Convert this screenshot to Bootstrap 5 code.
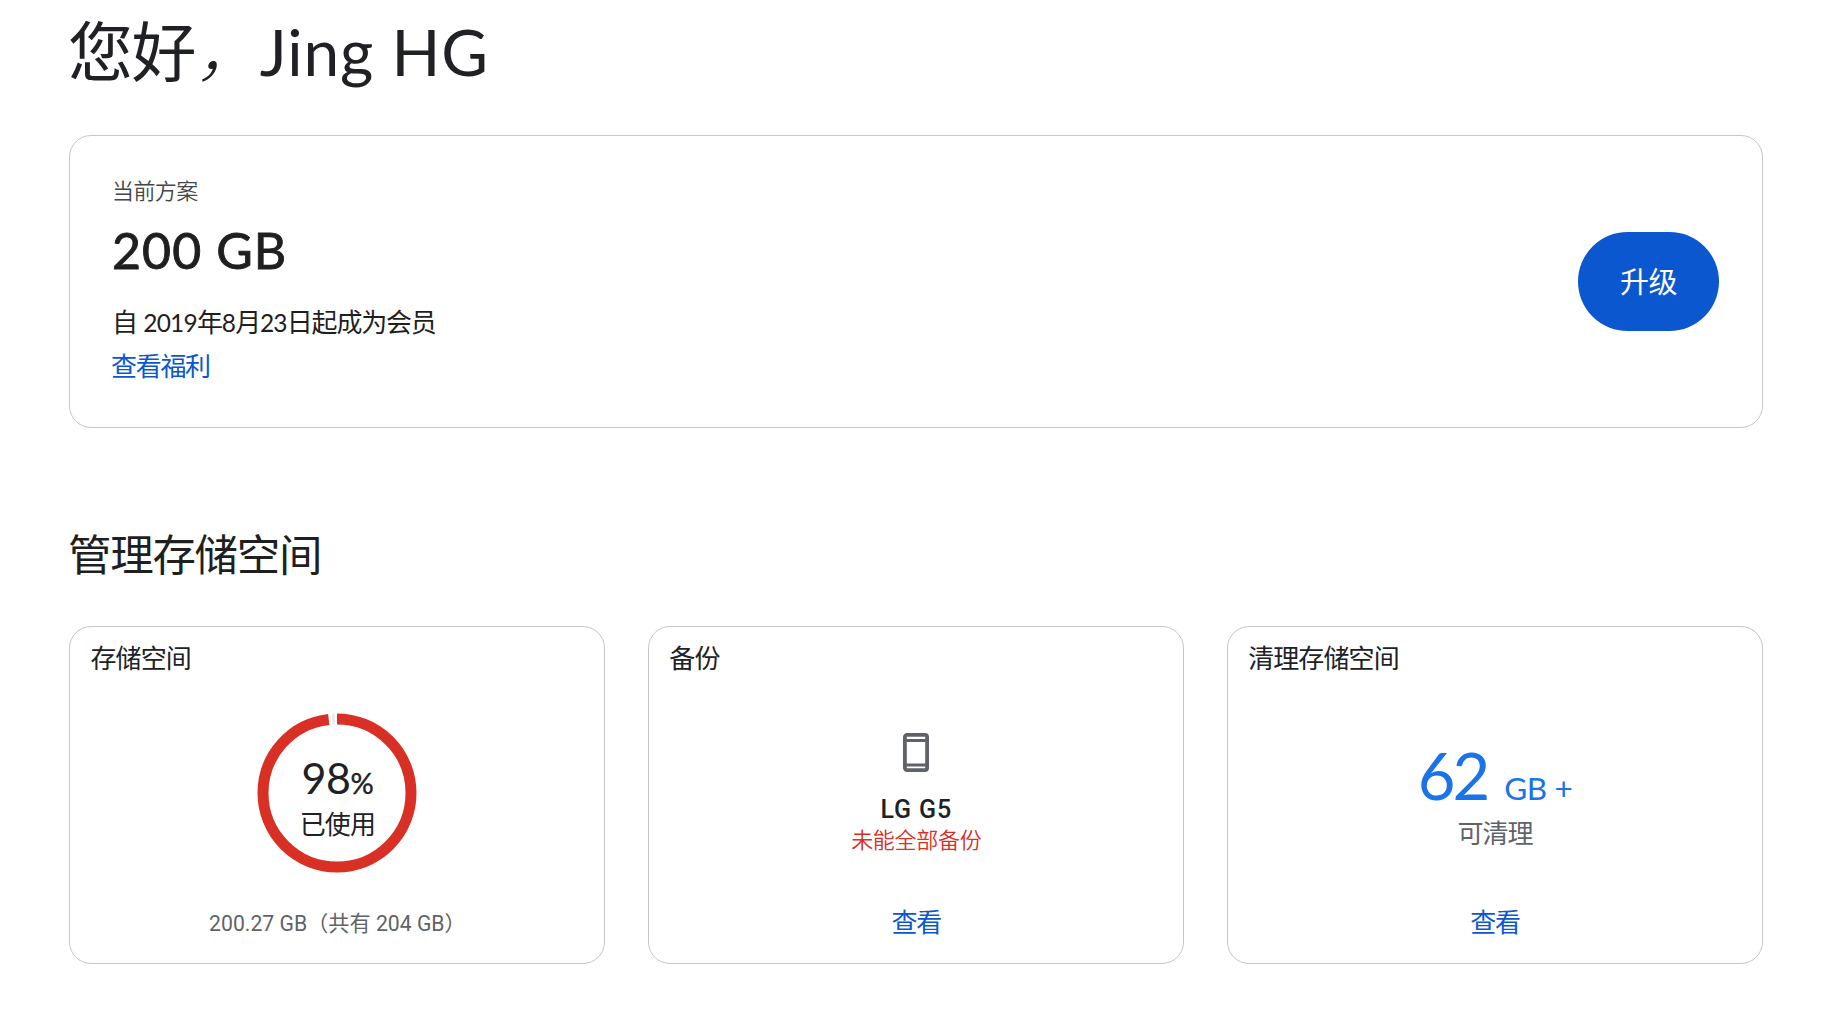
<!DOCTYPE html>
<html lang="zh-CN">
<head>
<meta charset="utf-8">
<meta name="viewport" content="width=device-width, initial-scale=1">
<title>存储空间</title>
<link href="https://cdn.jsdelivr.net/npm/bootstrap@5.3.0/dist/css/bootstrap.min.css" rel="stylesheet">
<style>
body{font-family:Lato,"Noto Sans CJK SC",sans-serif;color:#1f1f1f;background:#fff;overflow:hidden;font-weight:400}
.page{padding:0 74px 0 69px}
.greet{font-size:65px;letter-spacing:-1.4px;line-height:80px;padding-top:11px;color:#202124;height:135px;font-weight:400;white-space:nowrap;text-indent:-1px}
.greet .comma{font-weight:300;font-style:italic}
.greet .latin{font-size:64px;letter-spacing:.9px;margin-left:1px}
.panel{border:1px solid #c4c7c5;border-radius:22px}
.plan{height:293px;padding:40px 43px 0 42px}
.t21{font-size:22px;letter-spacing:-.6px;line-height:30px;font-weight:350}
.t25{font-size:26px;letter-spacing:-.9px;line-height:36px}
.plan-label{color:#444746}
.plan-size{font-size:50px;line-height:60px;letter-spacing:1.1px;-webkit-text-stroke:.9px #1f1f1f;margin-top:14px}
.since{margin-top:24px;letter-spacing:-1.2px}
.since .latin{font-size:24.5px;letter-spacing:-.8px}
.since .latin:first-child{margin-left:1px}
a.lk{color:#0b57d0;text-decoration:none;letter-spacing:-1.3px}
.perk{margin-top:7px;margin-left:-1px}
.upgrade{width:141px;height:99px;border-radius:50px;background:#0b57d0;color:#fff;font-size:29px;letter-spacing:-.6px;margin-top:56px;padding:0}
.section-head{font-size:43.5px;letter-spacing:-1.3px;line-height:60px;font-weight:400;margin:96px 0 42px;text-indent:-1px}
.tiles{gap:42.5px}
.tile{height:338px;flex:1 1 0;padding:13px 20px 0 20.5px;color:#202124}
.tile-body{height:224px;margin-top:4px}
.tile-foot{line-height:36px}
.ring{width:160px;height:160px;margin-top:33px}
.ring svg{inset:0}
.pct{font-size:43px;line-height:44px;margin-top:43px;letter-spacing:-.5px}
.pct .sign{font-size:29px;-webkit-text-stroke:.4px #202124}
.used{margin-top:1px}
.quota{font-family:Roboto,"Noto Sans CJK SC",sans-serif;font-size:21.2px;color:#5f6368;font-weight:400;padding-top:2px}
.device{font-family:Roboto,sans-serif;font-size:25px;font-weight:500;letter-spacing:.9px;line-height:32px;margin-top:22px}
.phone{margin-top:53px}
.warn{color:#d93025;letter-spacing:-.3px;margin-top:-1px}
.free{color:#1a73e8;font-size:65px;line-height:70px;letter-spacing:-3px;margin-top:60px}
.free .unit{font-size:31.5px;letter-spacing:-.4px;margin-left:17px;word-spacing:0}
.muted{color:#5f6368;margin-top:-8px}
</style>
<script src="https://cdn.jsdelivr.net/npm/bootstrap@5.3.0/dist/js/bootstrap.bundle.min.js"></script>
</head>
<body>
<main class="page">
  <h1 class="greet m-0">您好<span class="comma">，</span><span class="latin">Jing HG</span></h1>
  <section class="panel plan d-flex justify-content-between align-items-start">
    <div>
      <div class="t21 plan-label">当前方案</div>
      <div class="plan-size">200 GB</div>
      <div class="t25 since">自 <span class="latin">2019</span>年<span class="latin">8</span>月<span class="latin">23</span>日起成为会员</div>
      <div class="t25 perk"><a class="lk" href="#">查看福利</a></div>
    </div>
    <button type="button" class="btn upgrade">升级</button>
  </section>
  <h2 class="section-head">管理存储空间</h2>
  <section class="tiles d-flex">
    <article class="panel tile">
      <div class="t25">存储空间</div>
      <div class="tile-body d-flex flex-column align-items-center">
        <div class="ring position-relative text-center">
          <svg class="position-absolute" width="160" height="160" viewBox="0 0 160 160" fill="none" stroke-width="11">
            <circle cx="80" cy="80" r="74" stroke="#d93025" pathLength="100" stroke-dasharray="98.2 1.8" transform="rotate(-90 80 80)"/>
            <path d="M75.3 6.2L77.7 6.1" stroke="#e8eaed"/>
          </svg>
          <div class="pct">98<span class="sign">%</span></div>
          <div class="t25 used">已使用</div>
        </div>
      </div>
      <div class="tile-foot quota text-center">200.27 GB（共有 204 GB）</div>
    </article>
    <article class="panel tile">
      <div class="t25">备份</div>
      <div class="tile-body d-flex flex-column align-items-center">
        <svg class="phone" width="26" height="39" viewBox="0 0 26 39" fill="none" stroke="#5f6368">
          <rect x="1.9" y="1.9" width="22.2" height="35.2" rx="2.2" stroke-width="3.8"/>
          <path d="M2 7.5H24M2 32H24" stroke-width="3"/>
        </svg>
        <div class="device">LG G5</div>
        <div class="t21 warn">未能全部备份</div>
      </div>
      <div class="tile-foot t25 text-center"><a class="lk" href="#">查看</a></div>
    </article>
    <article class="panel tile">
      <div class="t25">清理存储空间</div>
      <div class="tile-body d-flex flex-column align-items-center">
        <div class="free">62<span class="unit">GB +</span></div>
        <div class="t25 muted">可清理</div>
      </div>
      <div class="tile-foot t25 text-center"><a class="lk" href="#">查看</a></div>
    </article>
  </section>
</main>
</body>
</html>
